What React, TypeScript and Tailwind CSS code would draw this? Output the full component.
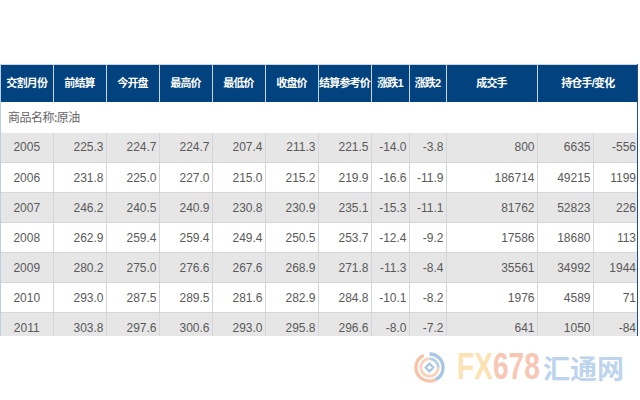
const headers = [
  { label: '交割月份', span: 1 },
  { label: '前结算', span: 1 },
  { label: '今开盘', span: 1 },
  { label: '最高价', span: 1 },
  { label: '最低价', span: 1 },
  { label: '收盘价', span: 1 },
  { label: '结算参考价', span: 1 },
  { label: '涨跌1', span: 1 },
  { label: '涨跌2', span: 1 },
  { label: '成交手', span: 1 },
  { label: '持仓手/变化', span: 2 },
];

const widths = [52, 53, 53, 53, 53, 53, 53, 38, 37, 91, 56, 45];

const rows: string[][] = [
  ['2005', '225.3', '224.7', '224.7', '207.4', '211.3', '221.5', '-14.0', '-3.8', '800', '6635', '-556'],
  ['2006', '231.8', '225.0', '227.0', '215.0', '215.2', '219.9', '-16.6', '-11.9', '186714', '49215', '1199'],
  ['2007', '246.2', '240.5', '240.9', '230.8', '230.9', '235.1', '-15.3', '-11.1', '81762', '52823', '226'],
  ['2008', '262.9', '259.4', '259.4', '249.4', '250.5', '253.7', '-12.4', '-9.2', '17586', '18680', '113'],
  ['2009', '280.2', '275.0', '276.6', '267.6', '268.9', '271.8', '-11.3', '-8.4', '35561', '34992', '1944'],
  ['2010', '293.0', '287.5', '289.5', '281.6', '282.9', '284.8', '-10.1', '-8.2', '1976', '4589', '71'],
  ['2011', '303.8', '297.6', '300.6', '293.0', '295.8', '296.6', '-8.0', '-7.2', '641', '1050', '-84'],
];

function Logo() {
  return (
    <svg width="31" height="31" viewBox="0 0 32 32">
      <path d="M16 2 A14 14 0 0 1 30 16 A14 14 0 0 1 22 28.6" fill="none" stroke="#a9c6e6" strokeWidth="3.5" />
      <path d="M22 28.6 A14 14 0 0 1 2 16 A14 14 0 0 1 10 3.4" fill="none" stroke="#f7c4aa" strokeWidth="3.5" />
      <path d="M16 7 A9 9 0 1 0 25 16" fill="none" stroke="#f9d2bd" strokeWidth="3" />
      <path d="M25 16 A9 9 0 0 0 16 7" fill="none" stroke="#b6cfea" strokeWidth="3" />
      <path d="M16 12 L20 16 L16 20 L12 16 Z" fill="none" stroke="#a9c6e6" strokeWidth="2.2" />
    </svg>
  );
}

export default function App() {
  return (
    <div className="relative w-[640px] h-[400px] bg-white overflow-hidden font-['Liberation_Sans','Noto_Sans_CJK_SC',sans-serif]">
      <div className="h-[64px]"></div>
      <div className="h-[272px] w-[638px] overflow-hidden border-l border-r border-l-[#b9cfe6] border-r-[#1f4f8f]">
        <table className="table-fixed border-collapse w-[636px] text-[12px]">
          <colgroup>
            {widths.map((w, i) => (
              <col key={i} style={{ width: w }} />
            ))}
          </colgroup>
          <thead>
            <tr className="h-[37px] bg-[#02437f]">
              {headers.map((h, i) => (
                <th
                  key={i}
                  colSpan={h.span}
                  className="border-r border-t border-[#c9d5e3] last:border-r-0 text-white font-bold text-[11px] text-center px-0 whitespace-nowrap overflow-hidden font-['Liberation_Sans','Noto_Sans_CJK_SC',sans-serif] tracking-[-0.8px]"
                >
                  {h.label}
                </th>
              ))}
            </tr>
          </thead>
          <tbody>
            <tr className="h-[31px] bg-white">
              <td colSpan={12} className="pl-[7px] text-[#666] text-[12px] tracking-[-0.5px] font-['Noto_Sans_CJK_SC',sans-serif]">
                商品名称:原油
              </td>
            </tr>
            {rows.map((r, ri) => (
              <tr key={ri} className={`h-[30px] ${ri % 2 === 0 ? 'bg-[#e6e6e6]' : 'bg-white'}`}>
                {r.map((c, ci) => (
                  <td
                    key={ci}
                    className={`border-r border-b border-[#d6d6d6] last:border-r-0 text-[#5a5a5a] ${
                      ci === 0 ? 'text-center' : 'text-right pr-[2px]'
                    } whitespace-nowrap overflow-hidden`}
                  >
                    {c}
                  </td>
                ))}
              </tr>
            ))}
          </tbody>
        </table>
      </div>

      <div className="absolute left-[414px] top-[349px] flex items-center whitespace-nowrap">
        <Logo />
        <span className="ml-[12px] inline-block w-[84px] text-[36px] font-bold leading-none">
          <span className="inline-block origin-left scale-x-[0.78]">
            <span className="text-[#fde2b3]">FX</span>
            <span className="text-[#f8c6b4]">678</span>
          </span>
        </span>
        <span className="ml-[2px] text-[27px] font-bold leading-none text-[#bcd4ee] font-['Noto_Sans_CJK_SC',sans-serif]">
          汇通网
        </span>
      </div>
    </div>
  );
}
